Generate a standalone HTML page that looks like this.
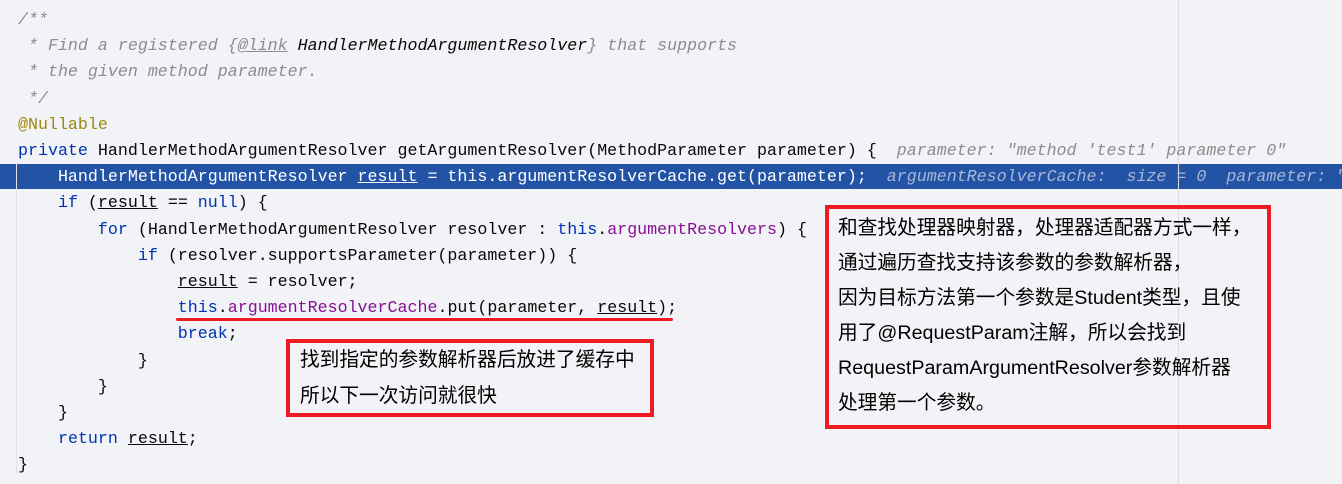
<!DOCTYPE html>
<html><head><meta charset="utf-8"><style>
html,body{margin:0;padding:0;}
body{width:1342px;height:484px;background:#f2f3f7;position:relative;overflow:hidden;font-family:"Liberation Mono","DejaVu Sans Mono",monospace;font-size:16.65px;}
.l{position:absolute;left:18px;height:26px;line-height:26px;white-space:pre;color:#080808;}
.c{color:#8c8c8c;font-style:italic}
.ct{color:#080808;font-style:italic}
.u{text-decoration:underline}
.k{color:#0033b3}
.a{color:#9e880d}
.f{color:#871094}
.h{color:#8c8c8c;font-style:italic}
.sel{position:absolute;left:0;top:164px;width:1342px;height:25px;background:#2253a5;}
.g{position:absolute;width:1px;background:#dcdde3;}
.box{position:absolute;border:4px solid #ed1c24;font-family:"Liberation Sans","Noto Sans CJK SC",sans-serif;font-size:19.7px;color:#000;white-space:nowrap;}
</style></head><body>
<div class="sel"></div>
<div class="g" style="left:1178px;top:0;height:484px;"></div>
<div class="g" style="left:16px;top:164px;height:310px;background:#e3e4e8"></div>
<div class="l c" style="top:7px">/**</div>
<div class="l c" style="top:33.2px"> * Find a registered {<span class="u">@link</span> <span class="ct">HandlerMethodArgumentResolver</span>} that supports</div>
<div class="l c" style="top:59.4px"> * the given method parameter.</div>
<div class="l c" style="top:85.6px"> */</div>
<div class="l a" style="top:111.8px">@Nullable</div>
<div class="l" style="top:138px"><span class="k">private</span> HandlerMethodArgumentResolver getArgumentResolver(MethodParameter parameter) {  <span class="h">parameter: "method 'test1' parameter 0"</span></div>
<div class="l" style="top:164.2px;color:#fff">    HandlerMethodArgumentResolver <span class="u">result</span> = this.argumentResolverCache.get(parameter);  <span style="color:#a9b7d6;font-style:italic">argumentResolverCache:  size = 0  parameter: "</span></div>
<div class="l" style="top:190.4px">    <span class="k">if</span> (<span class="u">result</span> == <span class="k">null</span>) {</div>
<div class="l" style="top:216.6px">        <span class="k">for</span> (HandlerMethodArgumentResolver resolver : <span class="k">this</span>.<span class="f">argumentResolvers</span>) {</div>
<div class="l" style="top:242.8px">            <span class="k">if</span> (resolver.supportsParameter(parameter)) {</div>
<div class="l" style="top:269px">                <span class="u">result</span> = resolver;</div>
<div class="l" style="top:295.2px">                <span class="k">this</span>.<span class="f">argumentResolverCache</span>.put(parameter, <span class="u">result</span>);</div>
<div class="l" style="top:321.4px">                <span class="k">break</span>;</div>
<div class="l" style="top:347.6px">            }</div>
<div class="l" style="top:373.8px">        }</div>
<div class="l" style="top:400px">    }</div>
<div class="l" style="top:426.2px">    <span class="k">return</span> <span class="u">result</span>;</div>
<div class="l" style="top:452.4px">}</div>
<div style="position:absolute;left:176px;top:318px;width:497px;height:3px;background:#ed1c24;border-radius:2px"></div>
<div class="box" style="left:825px;top:205px;width:438px;height:216px;">
<div style="position:absolute;left:9px;top:2px;line-height:35px">和查找处理器映射器，处理器适配器方式一样，<br>通过遍历查找支持该参数的参数解析器，<br>因为目标方法第一个参数是Student类型，且使<br>用了@RequestParam注解，所以会找到<br>RequestParamArgumentResolver参数解析器<br>处理第一个参数。</div></div>
<div class="box" style="left:286px;top:339px;width:360px;height:70px;">
<div style="position:absolute;left:10px;top:-1px;line-height:36px">找到指定的参数解析器后放进了缓存中<br>所以下一次访问就很快</div></div>
</body></html>
